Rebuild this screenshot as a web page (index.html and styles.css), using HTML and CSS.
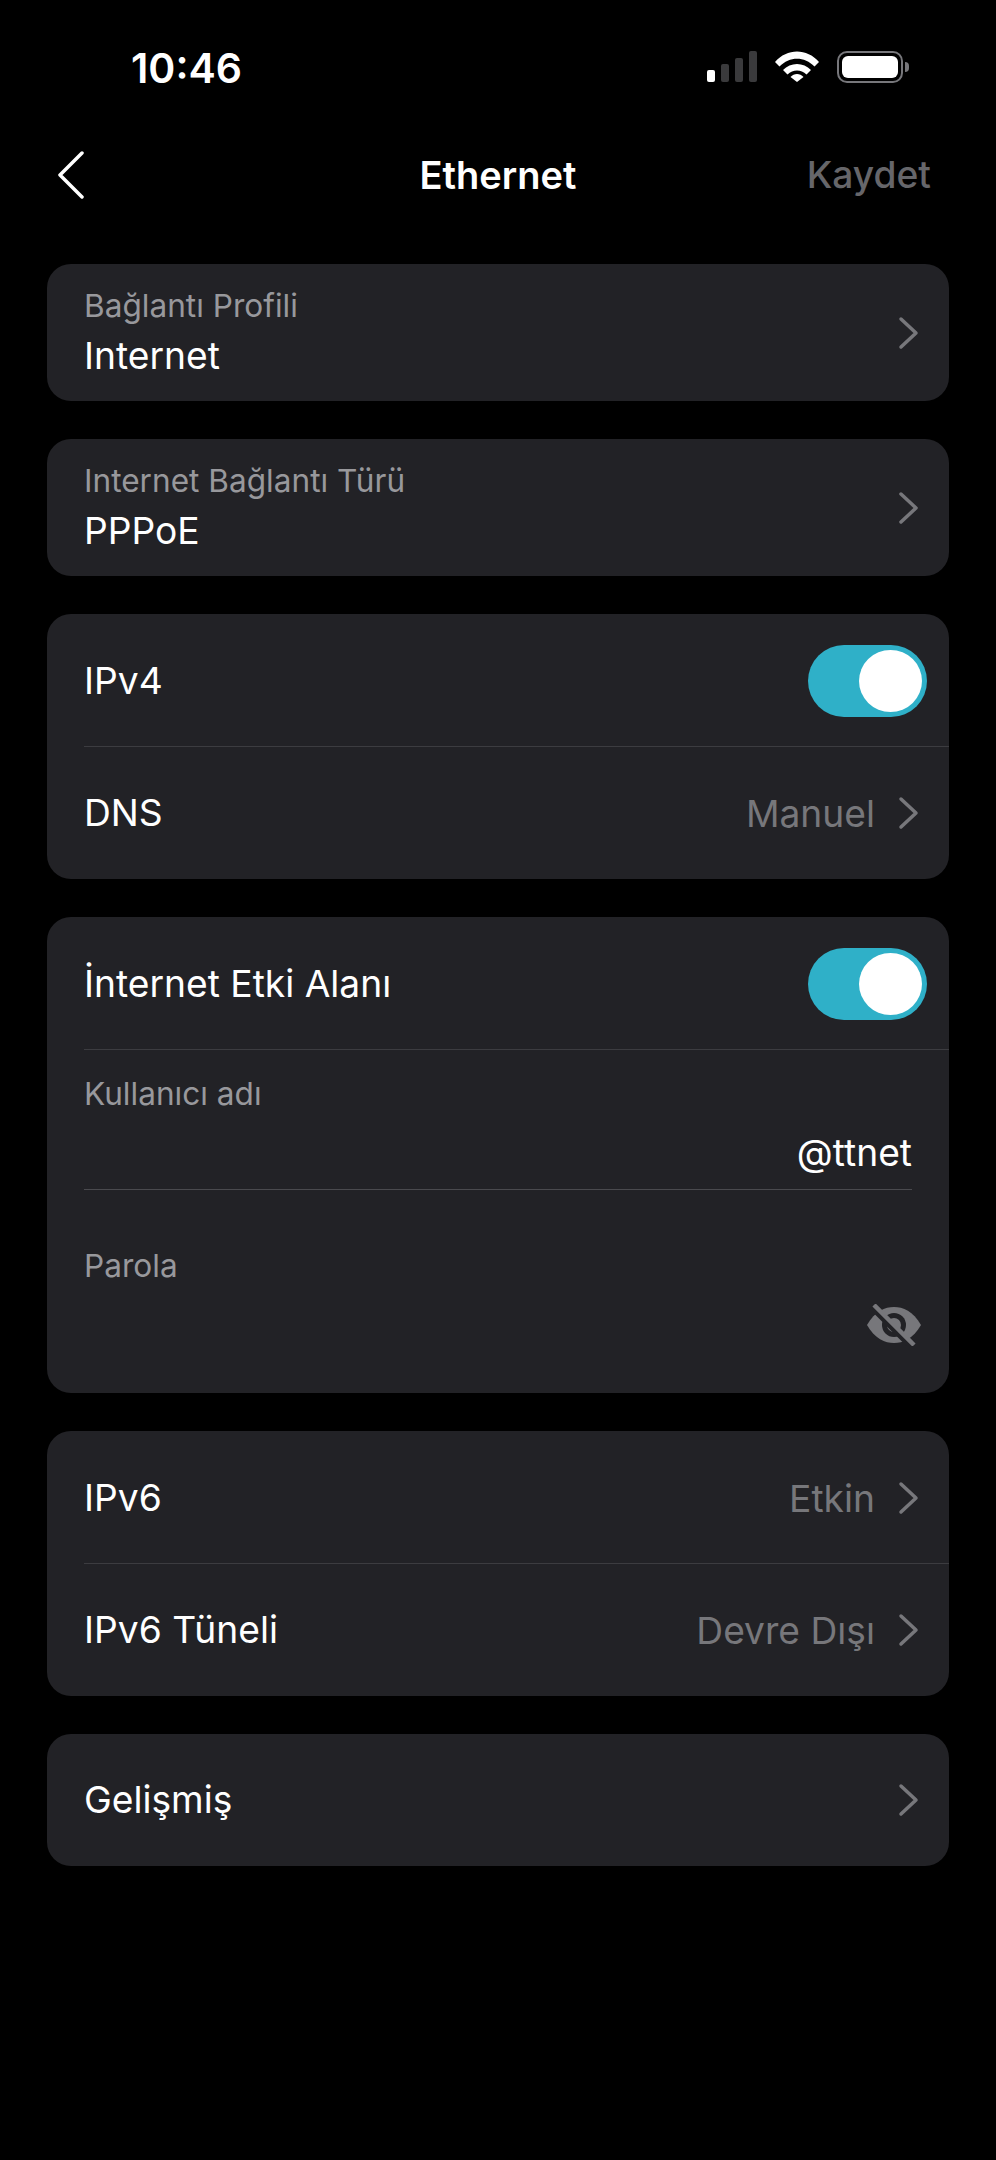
FILE: index.html
```html
<!DOCTYPE html>
<html lang="tr">
<head>
  <meta charset="UTF-8" />
  <title>Ethernet</title>
  <link rel="stylesheet" href="styles.css">
</head>
<body>

  <!-- status bar -->
  <div class="status-bar">
    <span class="time">10:46</span>
    <div class="status-icons">
      <div class="signal">
        <i class="bar bar-1"></i>
        <i class="bar bar-2"></i>
        <i class="bar bar-3"></i>
        <i class="bar bar-4"></i>
      </div>
      <svg class="wifi" width="44" height="31" viewBox="0 0 44 31">
        <path d="M0 11 C12 -3 32 -3 44 11 L39.500 15.500 C29.500 5 14.500 5 4.500 15.500 Z" fill="#fff"/>
        <path d="M8 19 C15.500 11 28.500 11 36 19 L31.500 23.500 C26 18 18 18 12.500 23.500 Z" fill="#fff"/>
        <path d="M15.500 26 C19 22 25 22 28.500 26 L22 31 Z" fill="#fff"/>
      </svg>
      <div class="battery"><div class="battery-fill"></div></div>
      <i class="battery-nub"></i>
    </div>
  </div>

  <!-- nav bar -->
  <div class="nav-bar">
    <svg class="back" width="30" height="48" viewBox="0 0 30 48">
      <path d="M26 2 L4 24 L26 46" fill="none" stroke="#fff" stroke-width="3.500" stroke-linecap="round" stroke-linejoin="round"/>
    </svg>
    <h1 class="nav-title">Ethernet</h1>
    <span class="nav-save">Kaydet</span>
  </div>

  <div class="card">
    <div class="row row-stack">
      <div class="stack">
        <div class="label">Bağlantı Profili</div>
        <div class="value">Internet</div>
      </div>
      <svg class="chevron" width="22" height="34" viewBox="0 0 22 34"><path d="M3 3 L18 17 L3 31"/></svg>
    </div>
  </div>

  <div class="card">
    <div class="row row-stack">
      <div class="stack">
        <div class="label">Internet Bağlantı Türü</div>
        <div class="value">PPPoE</div>
      </div>
      <svg class="chevron" width="22" height="34" viewBox="0 0 22 34"><path d="M3 3 L18 17 L3 31"/></svg>
    </div>
  </div>

  <div class="card">
    <div class="row line">
      <span class="value">IPv4</span>
      <div class="toggle"><div class="knob"></div></div>
    </div>
    <div class="row">
      <span class="value">DNS</span>
      <div class="right">
        <span class="hint">Manuel</span>
        <svg class="chevron" width="22" height="34" viewBox="0 0 22 34"><path d="M3 3 L18 17 L3 31"/></svg>
      </div>
    </div>
  </div>

  <div class="card">
    <div class="row line">
      <span class="value">İnternet Etki Alanı</span>
      <div class="toggle"><div class="knob"></div></div>
    </div>
    <div class="field">
      <div class="label">Kullanıcı adı</div>
      <div class="field-input underlined"><span class="value">@ttnet</span></div>
    </div>
    <div class="field field-last">
      <div class="label">Parola</div>
      <div class="field-input field-eye">
        <svg class="eye" width="54" height="42" viewBox="0 0 54 42">
          <path d="M0 21 C8 7 18 3 27 3 C36 3 46 7 54 21 C46 35 36 39 27 39 C18 39 8 35 0 21 Z" fill="#77777b"/>
          <circle cx="27" cy="21" r="12" fill="#222226"/>
          <circle cx="27" cy="21" r="7" fill="#77777b"/>
          <path d="M4 3 L44 43" stroke="#222226" stroke-width="5"/>
          <path d="M7 1 L47 41" stroke="#77777b" stroke-width="4.500"/>
        </svg>
      </div>
    </div>
  </div>

  <div class="card">
    <div class="row line">
      <span class="value">IPv6</span>
      <div class="right">
        <span class="hint">Etkin</span>
        <svg class="chevron" width="22" height="34" viewBox="0 0 22 34"><path d="M3 3 L18 17 L3 31"/></svg>
      </div>
    </div>
    <div class="row">
      <span class="value">IPv6 Tüneli</span>
      <div class="right">
        <span class="hint">Devre Dışı</span>
        <svg class="chevron" width="22" height="34" viewBox="0 0 22 34"><path d="M3 3 L18 17 L3 31"/></svg>
      </div>
    </div>
  </div>

  <div class="card">
    <div class="row">
      <span class="value">Gelişmiş</span>
      <svg class="chevron" width="22" height="34" viewBox="0 0 22 34"><path d="M3 3 L18 17 L3 31"/></svg>
    </div>
  </div>

</body>
</html>
```

FILE: styles.css
```css
* {
  box-sizing: border-box;
}

body {
  margin: 0;
  height: 2160px;
  background: #000;
  color: #fff;
  font-family: "Inter", "Liberation Sans", sans-serif;
}

.status-bar {
  height: 100px;
  padding: 50px 87px 0 131px;
  display: flex;
  justify-content: space-between;
}

.time {
  font-size: 41px;
  font-weight: 600;
  line-height: 36px;
}

.status-icons {
  display: flex;
  align-items: flex-start;
  padding-top: 1px;
}

.signal {
  display: flex;
  align-items: flex-end;
  gap: 6px;
  height: 31px;
  margin-right: 18px;
}

.bar {
  width: 8px;
  border-radius: 2px;
  background: #3a3a3c;
}

.bar-1 { height: 12px; background: #fff; }
.bar-2 { height: 18px; }
.bar-3 { height: 24px; }
.bar-4 { height: 31px; }

.wifi {
  margin-right: 18px;
}

.battery {
  width: 66px;
  height: 32px;
  padding: 3px;
  border: 2px solid #77777b;
  border-radius: 10px;
}

.battery-fill {
  height: 100%;
  border-radius: 6px;
  background: #fff;
}

.battery-nub {
  width: 4px;
  height: 10px;
  margin: 11px 0 0 2px;
  border-radius: 0 4px 4px 0;
  background: #77777b;
}

.nav-bar {
  height: 164px;
  padding: 51px 65px 0;
  display: grid;
  grid-template-columns: 1fr auto 1fr;
  align-items: start;
}

.back {
  margin-left: -9px;
}

.nav-title {
  margin: 0;
  font-size: 38px;
  font-weight: 600;
  line-height: 48px;
}

.nav-save {
  justify-self: end;
  font-size: 37.200px;
  font-weight: 500;
  line-height: 48px;
  color: #66666a;
}

.card {
  margin: 0 47px 38px;
  background: #222226;
  border-radius: 24px;
}

.row {
  height: 132px;
  padding: 0 29px 0 37px;
  display: flex;
  justify-content: space-between;
  align-items: center;
}

.row-stack {
  height: 137px;
}

.stack {
  margin-bottom: 3px;
}

.stack .label {
  margin-bottom: 3px;
}

.line {
  height: 133px;
  margin-left: 37px;
  padding-top: 2px;
  padding-left: 0;
  border-bottom: 1px solid #3c3c40;
}

.label {
  font-size: 31.600px;
  line-height: 46px;
  color: #98989c;
}

.value {
  font-size: 37.200px;
  line-height: 48px;
  color: #fff;
}

.hint {
  font-size: 37.200px;
  color: #77777b;
}

.right {
  display: flex;
  align-items: center;
  gap: 23px;
}

.chevron {
  fill: none;
  stroke: #77777b;
  stroke-width: 3.500;
  stroke-linecap: round;
  stroke-linejoin: round;
}

.toggle {
  width: 119px;
  height: 72px;
  margin-right: -7px;
  padding: 5px;
  display: flex;
  justify-content: flex-end;
  border-radius: 36px;
  background: #2fb0c8;
}

.knob {
  width: 63px;
  height: 62px;
  border-radius: 50%;
  background: #fff;
}

.field {
  padding: 21px 37px 0;
  height: 140px;
}

.field-last {
  height: 203px;
  padding-top: 53px;
}

.field-input {
  display: flex;
  justify-content: flex-end;
  align-items: center;
  height: 73px;
}

.field-eye {
  height: 72px;
  margin-right: -9px;
}

.underlined {
  border-bottom: 1px solid #4a4a4e;
}
```
